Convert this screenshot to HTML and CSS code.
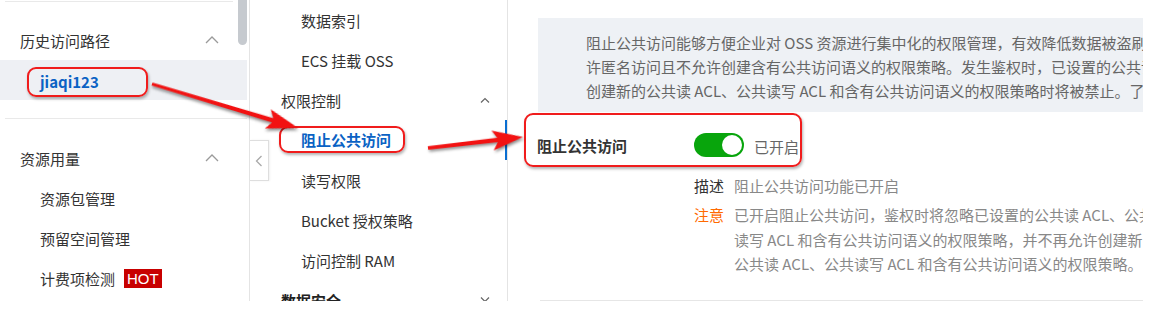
FILE: index.html
```html
<!DOCTYPE html>
<html>
<head>
    <title>阻止公共访问</title>
    <link rel="stylesheet" href="styles.css">
</head>
<body>
    <div class="screen">
        <aside class="nav">
            <div class="nav-thumb"></div>
            <div class="nav-sep top"></div>
            <div class="nav-head">
                <span>历史访问路径</span>
                <svg class="chev" width="14" height="8" viewBox="0 0 14 8"><polyline points="1,7 7,1 13,7" /></svg>
            </div>
            <div class="nav-item active"><span class="path-tag">jiaqi123</span></div>
            <div class="nav-sep"></div>
            <div class="nav-head">
                <span>资源用量</span>
                <svg class="chev" width="14" height="8" viewBox="0 0 14 8"><polyline points="1,7 7,1 13,7" /></svg>
            </div>
            <div class="nav-item">资源包管理</div>
            <div class="nav-item">预留空间管理</div>
            <div class="nav-item">计费项检测 <span class="hot">HOT</span></div>
        </aside>

        <aside class="sub">
            <div class="collapse">
                <svg width="8" height="12" viewBox="0 0 8 12"><polyline points="6.5,1 1.5,6 6.5,11" /></svg>
            </div>
            <div class="sub-item">数据索引</div>
            <div class="sub-item">ECS 挂载 OSS</div>
            <div class="sub-head">
                <span>权限控制</span>
                <svg class="chev-sm" width="10" height="6" viewBox="0 0 10 6"><polyline points="1,5.5 5,1.5 9,5.5" /></svg>
            </div>
            <div class="sub-item current"><span class="sub-tag">阻止公共访问</span></div>
            <div class="sub-item">读写权限</div>
            <div class="sub-item">Bucket 授权策略</div>
            <div class="sub-item">访问控制 RAM</div>
            <div class="sub-head strong">
                <span>数据安全</span>
                <svg class="chev-sm" width="10" height="6" viewBox="0 0 10 6"><polyline points="1,0.5 5,4.5 9,0.5" /></svg>
            </div>
        </aside>

        <main class="main">
            <div class="intro">
                <div class="intro-line">阻止公共访问能够方便企业对 OSS 资源进行集中化的权限管理，有效降低数据被盗刷的风险。开启后，将不允</div>
                <div class="intro-line">许匿名访问且不允许创建含有公共访问语义的权限策略。发生鉴权时，已设置的公共读写权限将被忽略，</div>
                <div class="intro-line">创建新的公共读 ACL、公共读写 ACL 和含有公共访问语义的权限策略时将被禁止。了解更多</div>
            </div>

            <div class="setting">
                <span class="setting-label">阻止公共访问</span>
                <span class="toggle"><span class="knob"></span></span>
                <span class="state">已开启</span>
            </div>

            <div class="details">
                <div class="detail-row">
                    <span class="detail-key">描述</span>
                    <span class="detail-val">阻止公共访问功能已开启</span>
                </div>
                <div class="detail-row">
                    <span class="detail-key warn">注意</span>
                    <div class="detail-val">
                        <div class="note-line">已开启阻止公共访问，鉴权时将忽略已设置的公共读 ACL、公共</div>
                        <div class="note-line">读写 ACL 和含有公共访问语义的权限策略，并不再允许创建新的</div>
                        <div class="note-line">公共读 ACL、公共读写 ACL 和含有公共访问语义的权限策略。</div>
                    </div>
                </div>
            </div>

            <div class="main-rule"></div>
        </main>

        <svg class="arrows" width="1143" height="301" viewBox="0 0 1143 301">
            <path class="arrow" transform="translate(152 84) rotate(16.77)" d="M0,-1.6 L126,-2.2 L121,-10 L152.5,0 L121,10 L126,2.2 L0,1.6 Z" />
            <path class="arrow" transform="translate(428 148) rotate(-6.6)" d="M0,-1.8 L70,-2.2 L65,-10 L95.6,0 L65,10 L70,2.2 L0,1.8 Z" />
        </svg>
    </div>
</body>
</html>
```

FILE: styles.css
```css
body {
    margin: 0;
    background: #ffffff;
    font-family: "Noto Sans CJK SC", "Noto Sans", sans-serif;
    font-size: 15px;
    color: #333333;
}

.screen {
    position: relative;
    display: flex;
    width: 1143px;
    height: 301px;
    overflow: hidden;
}

/* left menu */
.nav {
    position: relative;
    flex: none;
    width: 250px;
    box-sizing: border-box;
    border-right: 1px solid #e4e4e4;
}

.nav-thumb {
    position: absolute;
    top: -6px;
    right: 2px;
    width: 9px;
    height: 51px;
    border-radius: 5px;
    background: #c6cacf;
}

.nav-sep {
    height: 1px;
    margin: 18px 2px 0 5px;
    background: #e9e9e9;
}

.nav-sep.top {
    margin: 1px 16px 0 5px;
}

.nav-head {
    display: flex;
    align-items: center;
    justify-content: space-between;
    height: 40px;
    margin-top: 18px;
    padding: 0 30px 0 20px;
}

.nav-sep + .nav-head {
    margin-top: 19px;
}

.nav-sep.top + .nav-head {
    margin-top: 18px;
}

.chev polyline, .chev-sm polyline {
    fill: none;
    stroke: #9a9a9a;
    stroke-width: 1.3;
}

.chev-sm polyline {
    stroke: #666666;
    stroke-width: 1.2;
}

.nav-item {
    display: flex;
    align-items: center;
    height: 40px;
    padding-left: 40px;
}

.nav-item.active {
    margin-right: 2px;
    padding-left: 27px;
    background: #eef0f4;
}

.path-tag {
    display: inline-block;
    box-sizing: border-box;
    width: 121px;
    height: 30px;
    margin-top: 4px;
    padding-left: 11px;
    line-height: 26px;
    border: 2px solid #f01c1c;
    border-radius: 9px;
    box-shadow: 1px 2px 3px rgba(0, 0, 0, 0.3);
    color: #0a62c4;
    font-weight: bold;
}

.hot {
    display: inline-block;
    margin-left: 9px;
    padding: 0 3px;
    height: 19px;
    line-height: 19px;
    background: #c80000;
    color: #ffffff;
    font-family: "Liberation Sans", Arial, sans-serif;
    font-size: 15px;
}

/* second menu */
.sub {
    position: relative;
    flex: none;
    width: 258px;
    box-sizing: border-box;
    border-right: 1px solid #e4e4e4;
}

.collapse {
    position: absolute;
    top: 140px;
    left: 0;
    display: flex;
    align-items: center;
    justify-content: center;
    width: 18px;
    height: 39px;
    background: #ffffff;
    border: 1px solid #dedede;
    border-left: none;
    box-shadow: 1px 0 2px rgba(0, 0, 0, 0.06);
}

.collapse polyline {
    fill: none;
    stroke: #a9a9a9;
    stroke-width: 1.3;
}

.sub-item {
    display: flex;
    align-items: center;
    height: 40px;
    padding-left: 51px;
}

.sub-head {
    display: flex;
    align-items: center;
    justify-content: space-between;
    height: 40px;
    padding: 0 17px 0 31px;
}

.sub-head.strong {
    font-weight: 600;
    color: #222222;
}

.sub-item.current {
    padding-left: 29px;
    box-shadow: inset -2px 0 0 #0a6ed1;
}

.sub-tag {
    display: inline-block;
    box-sizing: border-box;
    width: 126px;
    height: 27px;
    margin-top: -2px;
    padding-left: 20px;
    line-height: 23px;
    border: 2px solid #f01c1c;
    border-radius: 9px;
    box-shadow: 1px 2px 3px rgba(0, 0, 0, 0.3);
    color: #0a62c4;
    font-weight: bold;
}

/* main */
.main {
    flex: 1;
    min-width: 0;
    padding: 18px 0 0 30px;
}

.intro {
    box-sizing: border-box;
    height: 94px;
    padding: 13px 0 0 48px;
    overflow: hidden;
    background: #eef1f5;
    color: #666666;
    line-height: 24px;
}

.intro-line {
    white-space: nowrap;
}

.setting {
    display: flex;
    align-items: center;
    box-sizing: border-box;
    width: 278px;
    height: 54px;
    margin: 1px 0 0 -14px;
    padding: 10px 0 0 11px;
    border: 2px solid #f01c1c;
    border-radius: 9px;
    box-shadow: 1px 2px 3px rgba(0, 0, 0, 0.3);
    white-space: nowrap;
}

.setting-label {
    flex: none;
    width: 157px;
    font-weight: bold;
    color: #333333;
}

.toggle {
    display: flex;
    flex: none;
    justify-content: flex-end;
    align-items: center;
    box-sizing: border-box;
    width: 50px;
    height: 24px;
    padding-right: 2px;
    border-radius: 12px;
    background: #08a50c;
}

.knob {
    width: 20px;
    height: 20px;
    border-radius: 50%;
    background: #ffffff;
}

.state {
    flex: none;
    margin-left: 10px;
    margin-top: 2px;
    color: #666666;
}

.details {
    padding-left: 156px;
    margin-top: 7px;
}

.detail-row {
    display: flex;
    line-height: 24px;
    white-space: nowrap;
}

.detail-row + .detail-row {
    margin-top: 5px;
}

.detail-key {
    flex: none;
    width: 40px;
    color: #333333;
}

.detail-key.warn {
    color: #ff6a00;
}

.detail-val {
    color: #888888;
}

.note-line {
    line-height: 24.5px;
}

.main-rule {
    height: 1px;
    margin: 23px 0 0 2px;
    background: #e6e6e6;
}

/* annotations */
.arrows {
    position: absolute;
    top: 0;
    left: 0;
    pointer-events: none;
}

.arrow {
    fill: #f21212;
    filter: drop-shadow(1px 2px 1.5px rgba(0, 0, 0, 0.45));
}
```
